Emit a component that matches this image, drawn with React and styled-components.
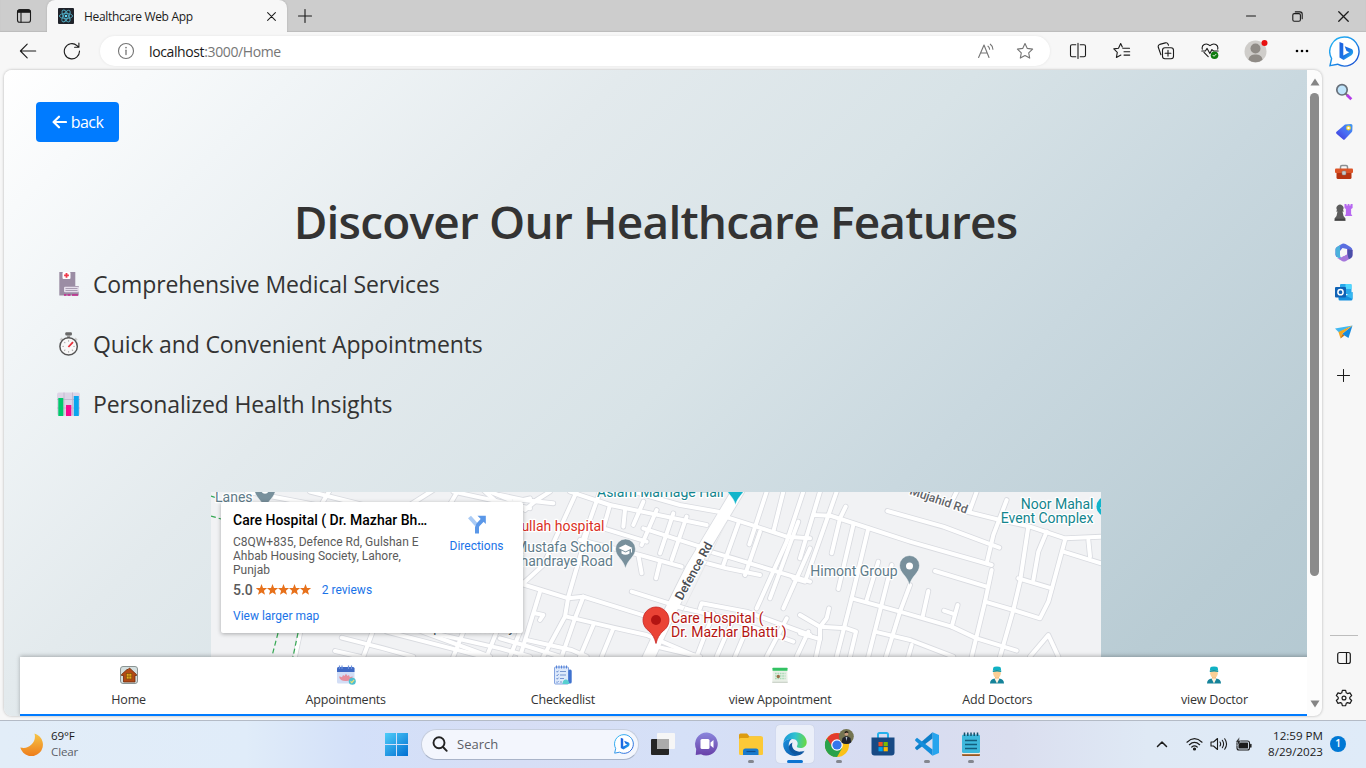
import React from "react";
import styled, { createGlobalStyle } from "styled-components";

const GlobalStyle = createGlobalStyle`
  * { box-sizing: border-box; }
  body { margin: 0; overflow: hidden; font-family: "Open Sans", "Noto Sans", sans-serif; color: #1b1b1b; }
  svg { display: block; flex: none; }
`;

/* ---------- window ---------- */

const Screen = styled.div`
  width: 1366px;
  height: 768px;
  display: flex;
  flex-direction: column;
  background: #f7f7f7;
  overflow: hidden;
`;

const TabStrip = styled.header`
  height: 32px;
  flex: none;
  display: flex;
  align-items: stretch;
  background: #cdcdcd;
  box-shadow: inset 0 -1px 1px #bcbcbc;
`;

const StripButton = styled.div`
  width: ${(p) => p.$width}px;
  display: flex;
  align-items: center;
  justify-content: center;
`;

const Tab = styled.div`
  width: 240px;
  display: flex;
  align-items: center;
  padding: 0 11px 0 11px;
  background: #f7f7f7;
  border-radius: 8px 8px 0 0;
  box-shadow: 0 0 2px #a8a8a8;
  clip-path: inset(-3px -3px 0 -3px);
`;

const TabTitle = styled.span`
  flex: 1;
  margin-left: 10px;
  font-size: 12px;
  letter-spacing: -0.33px;
  white-space: nowrap;
`;

const WindowButtons = styled.div`
  display: flex;
  margin-left: auto;
`;

const Toolbar = styled.div`
  height: 38px;
  flex: none;
  display: flex;
  align-items: center;
  padding-left: 6px;
`;

const ToolSlot = styled.div`
  width: ${(p) => p.$width || 44}px;
  height: 38px;
  display: flex;
  align-items: center;
  justify-content: center;
`;

const AddressBar = styled.div`
  width: 950px;
  height: 30px;
  margin: 0 5px 0 6px;
  padding: 0 16px 0 17px;
  display: flex;
  align-items: center;
  background: #fff;
  border-radius: 15px;
  box-shadow: 0 0 3px rgba(0, 0, 0, 0.08);
`;

const Url = styled.span`
  flex: 1;
  margin-left: 14px;
  font-size: 14px;
  letter-spacing: -0.38px;
  color: #767676;
  em { font-style: normal; color: #1a1a1a; }
`;

const AddressActions = styled.div`
  display: flex;
  gap: 20px;
`;

const Workspace = styled.div`
  height: 650px;
  flex: none;
  display: flex;
  padding-left: 4px;
`;

const Viewport = styled.div`
  width: 1318px;
  height: 646px;
  display: flex;
  border-radius: 8px;
  overflow: hidden;
  background: #fcfcfc;
  box-shadow: 0 0 3px rgba(0, 0, 0, 0.28);
`;

/* ---------- page ---------- */

const Page = styled.main`
  width: 1303px;
  flex: none;
  display: flex;
  flex-direction: column;
  overflow: hidden;
  background: linear-gradient(135deg, #ffffff 0%, #f1f5f7 15%, #e3eaed 32%, #d8e3e7 50%, #c9d8df 67%, #b9ccd4 88%, #b3c8d1 100%);
`;

const PageBody = styled.div`
  height: 587px;
  flex: none;
  padding: 32px 32px 0;
  overflow: hidden;
`;

const BackButton = styled.button`
  width: 83px;
  height: 40px;
  padding: 0;
  display: flex;
  align-items: center;
  justify-content: center;
  gap: 4px;
  border: 0;
  border-radius: 4px;
  background: #007bff;
  color: #fff;
  font: 400 16px "Open Sans", sans-serif;
  letter-spacing: -0.5px;
`;

const Heading = styled.h1`
  margin: 46px 0 0;
  height: 66px;
  line-height: 66px;
  text-align: center;
  font-size: 46px;
  font-weight: 600;
  letter-spacing: -0.81px;
  color: #333;
  white-space: nowrap;
`;

const FeatureList = styled.ul`
  list-style: none;
  margin: 0;
  padding: 0 0 0 21px;
`;

const Feature = styled.li`
  height: 60px;
  display: flex;
  align-items: center;
  gap: 12px;
  font-size: 23px;
  letter-spacing: -0.13px;
  color: #333;
`;

const MapFrame = styled.section`
  position: relative;
  width: 890px;
  height: 165px;
  margin: 58px auto 0;
  background: #f1f2f4;
  overflow: hidden;
`;

const PlaceCard = styled.div`
  position: absolute;
  left: 10px;
  top: 10px;
  width: 302px;
  height: 131px;
  padding: 9px 0 0 12.5px;
  display: flex;
  background: #fff;
  border-radius: 2px;
  box-shadow: 0 1px 4px rgba(0, 0, 0, 0.3);
  font-family: Roboto, sans-serif;
  font-size: 12px;
  line-height: 14px;
  color: #5b5b5b;
`;

const PlaceInfo = styled.div`
  width: 204px;
`;

const PlaceName = styled.div`
  font-size: 14px;
  font-weight: 500;
  line-height: 18px;
  color: #000;
  white-space: nowrap;
`;

const PlaceAddress = styled.div`
  width: 200px;
  margin-top: 6px;
`;

const Rating = styled.div`
  display: flex;
  align-items: center;
  margin-top: 5px;
  height: 16px;
  b { font-size: 14px; font-weight: 500; margin-right: 3px; }
`;

const Link = styled.a`
  color: #1a73e8;
`;

const ReviewsLink = styled(Link)`
  margin-left: 10px;
`;

const LinkRow = styled.div`
  margin-top: 11px;
`;

const Directions = styled.div`
  width: 79px;
  padding-top: 4px;
  display: flex;
  flex-direction: column;
  align-items: center;
  gap: 5px;
`;

const BottomNav = styled.nav`
  position: relative;
  width: 1303px;
  height: 59px;
  flex: none;
  margin-left: 16px;
  display: grid;
  grid-template-columns: repeat(6, 1fr);
  background: #fff;
  border-bottom: 2px solid #007bff;
  box-shadow: 0 -1px 4px rgba(0, 0, 0, 0.28);
`;

const NavItem = styled.div`
  display: flex;
  flex-direction: column;
  align-items: center;
  padding-top: 8px;
  gap: 6px;
  font-size: 12.5px;
  line-height: 18px;
  letter-spacing: -0.2px;
  color: #333;
`;

/* ---------- scrollbar and side panel ---------- */

const Scrollbar = styled.div`
  width: 15px;
  display: flex;
  flex-direction: column;
  align-items: center;
  padding: 8px 0;
`;

const Thumb = styled.div`
  width: 9px;
  height: 483px;
  margin: 7px 0 auto;
  border-radius: 5px;
  background: #8b8b8b;
`;

const SidePanel = styled.aside`
  width: 43px;
  display: flex;
  flex-direction: column;
  align-items: center;
  padding: 2px 0 2px;
`;

const SideSlot = styled.div`
  height: ${(p) => p.$height || 40}px;
  display: flex;
  align-items: center;
`;

const SideDivider = styled.div`
  width: 28px;
  height: 1px;
  margin: auto 0 2px;
  background: #bdbdbd;
`;

/* ---------- taskbar ---------- */

const Taskbar = styled.footer`
  height: 48px;
  flex: none;
  display: flex;
  align-items: center;
  padding-bottom: 1px;
  border-top: 1px solid #b4bbc6;
  background: linear-gradient(90deg, #e2edf8 0%, #e0ecf9 18%, #d3e0f9 26%, #d7def5 38%, #d5e0f7 50%, #d7dcf1 64%, #dadeef 74%, #dfe9f5 84%, #dfebf8 100%);
`;

const Weather = styled.div`
  width: 374px;
  padding-left: 20px;
  display: flex;
  align-items: center;
  gap: 8px;
`;

const SmallLines = styled.div`
  font-size: 11.6px;
  line-height: 16px;
  letter-spacing: ${(p) => (p.$align ? "0" : "-0.15px")};
  text-align: ${(p) => p.$align || "left"};
  span { display: block; }
  span + span { color: ${(p) => p.$second || "inherit"}; }
`;

const TaskSlot = styled.div`
  position: relative;
  width: 44px;
  height: 46px;
  display: flex;
  align-items: center;
  justify-content: center;
`;

const ActiveTile = styled.div`
  width: 38px;
  height: 38px;
  display: flex;
  align-items: center;
  justify-content: center;
  border-radius: 4px;
  background: #ebeff9;
  box-shadow: 0 0 1px #aeb6c8;
`;

const RunningMark = styled.i`
  position: absolute;
  bottom: 4px;
  left: ${(p) => (p.$active ? 14 : 19)}px;
  width: ${(p) => (p.$active ? 16 : 6)}px;
  height: 3px;
  border-radius: 2px;
  background: ${(p) => (p.$active ? "#0b74d1" : "#84878f")};
`;

const SearchBox = styled.div`
  width: 218px;
  height: 31px;
  margin: 0 2px 0 3px;
  padding: 0 4px 0 10px;
  display: flex;
  align-items: center;
  border: 1px solid #c6cede;
  border-bottom-color: #a9b4c9;
  border-radius: 16px;
  background: #f3f6fd;
  font-size: 13px;
  color: #5c5f66;
  span { flex: 1; margin-left: 9px; }
`;

const Tray = styled.div`
  margin-left: auto;
  padding-right: 20px;
  display: flex;
  align-items: center;
`;

const TrayIcons = styled.div`
  display: flex;
  align-items: center;
  gap: 7px;
  margin: 0 16px 0 18px;
`;

const Badge = styled.div`
  width: 16px;
  height: 16px;
  margin-left: 7px;
  border-radius: 8px;
  background: #0078d4;
  color: #fff;
  font-size: 10px;
  font-weight: 600;
  line-height: 15px;
  text-align: center;
`;

/* ---------- line icons ---------- */

const Line = ({ w = 18, h = w, box = `0 0 ${w} ${h}`, c = "#1b1b1b", sw = 1.1, children }) => (
  <svg width={w} height={h} viewBox={box} fill="none" stroke={c} strokeWidth={sw} strokeLinecap="round" strokeLinejoin="round">
    {children}
  </svg>
);

const TabActionsIcon = () => (
  <Line w={16}>
    <rect x="1.5" y="1.7" width="13" height="12.6" rx="2.4" />
    <path d="M1.5 4.2a2.4 2.4 0 0 1 2.4-2.5h8.2a2.4 2.4 0 0 1 2.4 2.5z" fill="#1b1b1b" />
    <path d="M5 4.5v9.8" />
  </Line>
);
const CloseIcon = ({ size = 9 }) => <Line w={size} box="0 0 10 10" sw="1.15"><path d="M.7.7l8.6 8.6M9.3.7L.7 9.3" /></Line>;
const PlusIcon = ({ size = 14 }) => <Line w={size} box="0 0 14 14"><path d="M7 .5v13M.5 7h13" /></Line>;
const MinimizeIcon = () => <Line w={10}><path d="M.5 5h9" /></Line>;
const RestoreIcon = () => (
  <Line w={11}><rect x=".8" y="2.6" width="7.6" height="7.6" rx="1.5" /><path d="M3.3 .9h4.6a2.3 2.3 0 0 1 2.3 2.3v4.5" /></Line>
);
const BackIcon = () => <Line w={18}><path d="M16.7 9H1.5M8.2 2.2L1.4 9l6.8 6.8" /></Line>;
const ReloadIcon = () => <Line w={18}><path d="M16.5 9A7.6 7.6 0 1 1 14 3.6l1.6 1.4M15.9 1v4.2h-4.3" /></Line>;
const InfoIcon = () => (
  <Line w={18} c="#747474"><circle cx="9" cy="9" r="7.5" /><path d="M9 8.2v4.3" strokeWidth="1.3" /><path d="M9 5.6v.1" strokeWidth="1.6" /></Line>
);
const ReadAloudIcon = () => (
  <Line w={20} h={18} c="#747474"><path d="M2.6 15.5L8 3l5 12.5M4.6 11h6.7M12 4.2c1 .7 1.500 1.700 1.600 3M14.300 2.200c1.700 1.200 2.600 2.900 2.600 5" /></Line>
);
const StarShape = "M9 1.500l2.300 4.900 5.300.700-3.900 3.700 1 5.300L9 13.500l-4.700 2.600 1-5.300L1.400 7.100l5.300-.700z";
const StarIcon = () => <Line w={18} c="#747474"><path d={StarShape} /></Line>;
const SplitIcon = () => (
  <Line w={18}><path d="M6.800 2.800H3a1.500 1.500 0 0 0-1.500 1.500v9A1.500 1.500 0 0 0 3 14.800h3.800M11.200 2.800H15a1.500 1.500 0 0 1 1.500 1.500v9a1.500 1.500 0 0 1-1.500 1.500h-3.800M9 1.200v15.200" /></Line>
);
const FavoritesIcon = () => (
  <Line w={18}><path d="M9.800 6.300H16.500M11 9.700h5.700M11 13.100h5.700M9.300 4.900L7.700 1.600 5.500 6.200.800 6.900l3.500 3.400-.900 5.100 4.500-2.300" /></Line>
);
const CollectionsIcon = () => (
  <Line w={18}>
    <rect x="5.500" y="5.700" width="11" height="11" rx="2.500" />
    <path d="M11 8.300v5.800M8.100 11.200h5.800M3.900 12.700 1.300 5.300a2.300 2.300 0 0 1 1.500-2.900l5.600-1.500a2.300 2.300 0 0 1 2.700 1.400l.4 1" />
  </Line>
);
const HealthIcon = () => (
  <Line w={18}>
    <path d="M1.300 7.200C.300 3 4.800 0 9 3.700c4.200-3.700 8.700-.700 7.700 3.500M3 10.400l4.200 4.200" />
    <path d="M.8 9h3.600l1.700-2.600 2.800 5.200 2-4L12.500 9h4.700" />
    <circle cx="13.500" cy="13.200" r="3.800" fill="#107c10" stroke="none" />
    <path d="M12 13.300l1 1 2-2" stroke="#fff" strokeWidth=".9" />
  </Line>
);
const AvatarIcon = () => (
  <svg width="26" height="26" viewBox="0 0 26 26">
    <circle cx="12.500" cy="13.500" r="11" fill="#cfcdca" />
    <circle cx="12.500" cy="10.500" r="5" fill="#8f8b86" />
    <path d="M5.500 21.800c.5-4 3.400-5.300 7-5.300s6.500 1.300 7 5.300a11 11 0 0 1-14 0z" fill="#8f8b86" />
    <circle cx="21.500" cy="5" r="3" fill="#e81010" />
  </svg>
);
const DotsIcon = () => (
  <svg width="14" height="4"><circle cx="2" cy="2" r="1.300" /><circle cx="7" cy="2" r="1.300" /><circle cx="12" cy="2" r="1.300" /></svg>
);
const BingIcon = ({ size = 31 }) => (
  <svg width={size} height={size} viewBox="0 0 31 31">
    <defs>
      <linearGradient id="bingRing" x1="0" y1="0" x2="1" y2="1"><stop offset="0" stopColor="#27b8f5" /><stop offset=".5" stopColor="#1b8ee8" /><stop offset="1" stopColor="#1b45cf" /></linearGradient>
      <linearGradient id="bingB" x1="0" y1="0" x2="1" y2="1"><stop offset="0" stopColor="#1d5fe0" /><stop offset=".55" stopColor="#1b74e4" /><stop offset="1" stopColor="#2cc6f2" /></linearGradient>
    </defs>
    <path d="M15.500 1A14.500 14.500 0 1 1 8.500 28.200L1 29.700 2.600 22.500A14.500 14.500 0 0 1 15.500 1z" fill="#fff" stroke="url(#bingRing)" strokeWidth="1.400" />
    <path d="M10.500 6l3.800 1.500v12l6-3.300-2.800-1.300-1.800-4.600 7 2.700c2 1.300 2 4.700-.3 6.300l-7.800 4.800-4.100-2.500z" fill="url(#bingB)" />
  </svg>
);
const ReactFavicon = () => (
  <svg width="16" height="16" viewBox="0 0 16 16">
    <rect width="16" height="16" rx="1" fill="#20232a" />
    <g fill="none" stroke="#4fa8bf" strokeWidth=".9">
      {[0, 60, 120].map((a) => <ellipse key={a} cx="8" cy="8" rx="6.600" ry="2.600" transform={`rotate(${a} 8 8)`} />)}
    </g>
    <circle cx="8" cy="8" r="1.300" fill="#61dafb" />
  </svg>
);
const ArrowLeftBold = () => (
  <Line w={15} h={14} c="#fff" sw="2.200"><path d="M14 7H1.800M7 1.700L1.600 7 7 12.300" /></Line>
);

/* ---------- side panel icons ---------- */

const SearchColor = () => (
  <svg width="18" height="18" viewBox="0 0 18 18">
    <path d="M10.500 10.500l2.300 2.300" stroke="#777" strokeWidth="2" /><path d="M12 12l4.300 4.300" stroke="#b43be8" strokeWidth="2.800" />
    <circle cx="7" cy="6.800" r="5.200" fill="#bfe4fb" stroke="#68707a" strokeWidth="1.700" />
  </svg>
);
const TagIcon = () => (
  <svg width="18" height="18" viewBox="0 0 18 18">
    <defs><linearGradient id="tag" x1="1" y1="0" x2="0" y2="1"><stop offset="0" stopColor="#3f9bf2" /><stop offset=".5" stopColor="#4a6cf3" /><stop offset="1" stopColor="#3e35d8" /></linearGradient></defs>
    <path d="M10 1.500l6-.500q1.500 0 1.500 1.500l-.200 5.200q0 .8-.7 1.500l-6.700 7q-1 1-2 0L1.500 10.800q-1-1 0-2z" fill="url(#tag)" />
    <circle cx="13.500" cy="5" r="1.800" fill="#fff" stroke="#f4d531" strokeWidth="1.200" />
  </svg>
);
const ToolboxIcon = () => (
  <svg width="18" height="16" viewBox="0 0 18 16">
    <path d="M5.500 5V3q0-1.500 1.500-1.500h4q1.500 0 1.500 1.500v2" fill="none" stroke="#8b8f92" strokeWidth="1.500" />
    <path d="M1.500 8h15v5.500q0 1.500-1.500 1.500H3q-1.500 0-1.500-1.500z" fill="#b73410" />
    <rect x="0" y="4.500" width="18" height="4.500" rx="1" fill="#dc5427" />
    <rect x="7" y="7" width="4" height="4" rx="1" fill="#c9c9c9" stroke="#7a7a7a" strokeWidth=".5" />
  </svg>
);
const ChessIcon = () => (
  <svg width="19" height="19" viewBox="0 0 19 19">
    <path d="M10.500 1h2v1.500h1.200V1h1.700v1.500h1.200V1h2v4l-1.500 1v5l1.300 2h-7.500l1-2V6l-1.400-1z" fill="#b768f0" />
    <path d="M3 7a3.500 3.500 0 1 1 6 0l1 1.500H8.500l1 4.500 2 2.500V18H.500v-2.500L2.500 13l1-4.500H2z" fill="#5c5c5c" />
    <path d="M1 16.300h10" stroke="#3c3c3c" />
  </svg>
);
const M365Icon = () => (
  <svg width="18" height="19" viewBox="0 0 18 19">
    <path d="M6 1.500Q8 0 10.500 1l5 3Q17.500 5 17.500 7.500L15 9 12 6 7.500 5 5 8v5L1.500 14Q0 12.500.5 10V6.500Q.5 4.500 2 4z" fill="#5b6ee0" />
    <path d="M.5 10v-3.500Q.500 4.500 2 4l4-2.500Q4.500 3 5 6v6q0 2 1.500 3.200L3.500 15Q.800 14 .5 10z" fill="#4bb1dc" />
    <path d="M17.500 7v5q0 2-1.500 3l-5 3q-2 1-4 0L2 15q3 .500 5-1l5-3V6z" fill="#a678dc" />
    <path d="M12.500 6l5 1v5q0 2-1.500 3l-2 1.300q-1-2-1.500-5.300z" fill="#4a4fa8" />
    <path d="M9 6.200l3 1.700v3.300l-3 1.700-3-1.700V7.900z" fill="#f7f7f7" />
  </svg>
);
const OutlookIcon = () => (
  <svg width="18" height="17" viewBox="0 0 18 17">
    <rect x="5" y="0" width="11.500" height="10" rx="1" fill="#28a8ea" /><path d="M10.500 0h5q1 0 1 1v4h-6z" fill="#50d9ff" />
    <path d="M3.500 8.500l7 3.500L17.500 8v7q0 1.500-1.500 1.500H5q-1.500 0-1.500-1.500z" fill="#1490df" /><path d="M17.500 8v7l-7-3.500z" fill="#35b8f1" />
    <rect x="0" y="3" width="11" height="10.500" rx="1" fill="#0f62b5" />
    <circle cx="5.500" cy="8.200" r="2.600" fill="none" stroke="#fff" strokeWidth="1.500" />
  </svg>
);
const DropIcon = () => (
  <svg width="18" height="14" viewBox="0 0 18 14">
    <path d="M0 3.500L17.500.5 4 7.500z" fill="#41b8f1" /><path d="M17.500.500L13.500 13 7 9z" fill="#168bdf" />
    <path d="M3.500 7L17.500.5 7 9l-1.500 4.500z" fill="#f7a81e" /><path d="M5.500 13.500L7 9l2.500 1.500z" fill="#c9720d" />
  </svg>
);
const PanelIcon = () => <Line w={16} sw="1.200"><rect x="1.700" y="2.500" width="12.600" height="11" rx="2" /><path d="M10.500 2.500v11" /></Line>;
const GearIcon = () => (
  <Line w={18} box="0 0 24 24" sw="1.600">
    <circle cx="12" cy="12" r="2.600" />
    <path d="M9.800 1.800h4.400l.8 3.300 1.700 1 3.300-1 2.200 3.800-2.500 2.300v1.800l2.500 2.300-2.200 3.800-3.300-1-1.700 1-.8 3.200H9.800L9 19.100l-1.700-1-3.300 1-2.200-3.800L4.300 13v-1.800L1.800 8.900 4 5.100l3.300 1 1.700-1z" />
  </Line>
);

/* ---------- feature emoji ---------- */

const HospitalEmoji = () => (
  <svg width="24" height="24" viewBox="0 0 24 24">
    <path d="M2.300 0h16v14h3.400v9.500H2.300z" fill="#9b8da4" /><rect x="5.500" y="0" width="8" height="7" rx="1" fill="#fff" />
    <path d="M9.500 1v4.800M7.100 3.400h4.800" stroke="#f03a4b" strokeWidth="1.800" />
    <rect x="7" y="14.700" width="15" height="5.600" rx="1" fill="#e5deeb" />
    <path d="M8.500 16.500h12M8.500 18.500h12" stroke="#9b8da4" strokeWidth=".8" />
    <path d="M7 23h2.500M10.500 23h3M15 23h6" stroke="#c2258a" strokeWidth="1.300" />
  </svg>
);
const StopwatchEmoji = () => (
  <svg width="24" height="24" viewBox="0 0 24 24">
    <rect x="8.300" y=".2" width="6.600" height="3.400" rx="1" fill="#686868" /><path d="M11.600 3v3" stroke="#999" strokeWidth="3" />
    <path d="M3.500 8.500l2-2M19.700 8.500l-2-2" stroke="#ccc" strokeWidth="2.500" />
    <circle cx="11.600" cy="14.400" r="8.700" fill="#f8f8f8" stroke="#555" strokeWidth="1.500" />
    <g stroke="#aaa">{[0, 45, 90, 135, 180, 225, 270, 315].map((a) => <path key={a} d="M11.600 8.200v1.500" transform={`rotate(${a} 11.600 14.400)`} />)}</g>
    <path d="M11.400 15l4.600-4.800" stroke="#e8303a" strokeWidth="1.800" />
  </svg>
);
const ChartEmoji = () => (
  <svg width="24" height="24" viewBox="0 0 24 24">
    <rect width="23" height="23" y=".5" rx="2" fill="#dcd4e6" />
    <path d="M7 .5v23M15.500.5v23M0 7.500h23M0 16h23" stroke="#beb4cb" strokeWidth=".8" />
    <rect x="1.300" y="6" width="5" height="18" fill="#00c96b" /><rect x="9" y="13" width="5.300" height="11" fill="#f70a8d" /><rect x="16.800" y="4" width="5" height="20" fill="#0aa5ee" />
  </svg>
);

/* ---------- bottom nav icons ---------- */

const HomeColor = () => (
  <svg width="20" height="20" viewBox="0 0 20 20">
    <rect x="1.500" y="1.500" width="17" height="17" rx="2.500" fill="#d4dfdf" stroke="#8a9493" />
    <path d="M2.500 9.500L8 4.500h1L10.500 3l7 6.500v1H16V17H4.500v-6.500h-2z" fill="#b34a16" stroke="#6f2b0c" strokeWidth=".8" />
    <rect x="7.300" y="8.500" width="5.500" height="5.500" fill="#e7a81d" stroke="#7b4e0c" strokeWidth=".7" /><path d="M10 8.500V14M7.300 11.200h5.500" stroke="#7b4e0c" strokeWidth=".6" />
  </svg>
);
const CalendarColor = () => (
  <svg width="20" height="20" viewBox="0 0 20 20">
    <rect x="1" y="2" width="17.500" height="16.500" rx="1.500" fill="#d3def6" /><path d="M1 7V3.500Q1 2 2.500 2H17q1.500 0 1.500 1.500V7z" fill="#3f69c4" />
    <path d="M3.500.5v3.500M6 .5v3.500M12.500.5v3.500M15.500.5v3.500" stroke="#6d91dc" strokeWidth="1.200" />
    <path d="M3 11.500q2 0 3 .8L7 10l1.500 1L10 8.800l1.500 2.200L13 10l.8 2.300q1.500-.8 3-.8-1 4.500-7 4.500t-6.800-4.500z" fill="#e58e9d" />
    <circle cx="16.300" cy="16.300" r="3.500" fill="#50bfd0" /><path d="M14.500 16.300l1.300 1.300 2.400-2.800" stroke="#f4e36c" strokeWidth="1.100" fill="none" />
  </svg>
);
const ChecklistColor = () => (
  <svg width="20" height="20" viewBox="0 0 20 20">
    <rect x="1.500" y="2" width="14" height="17" rx="1" fill="#dde9fb" stroke="#789bdc" strokeWidth=".9" />
    <path d="M3.500.500v3M6 .5v3M8.500.5v3M11 .5v3M13.500.5v3" stroke="#5583d8" />
    <path d="M3.500 6.500l.7.700 1.300-1.500M3.500 10l.7.700L5.500 9.200M3.500 13.500l.7.700 1.300-1.500M3.500 17l.7.500 1.300-1.300" stroke="#3a67bd" strokeWidth=".8" fill="none" />
    <path d="M7 6.500h6M7 10h6M7 13.500h4M7 17h2" stroke="#6a8cc9" strokeWidth=".9" />
    <rect x="15.300" y="4.500" width="3.400" height="14" rx="1.500" fill="#3f72cf" /><path d="M9.500 19q0-4 3-4.500 3-.300 4 4.500z" fill="#57cfd0" />
  </svg>
);
const GreenCalendar = () => (
  <svg width="20" height="20" viewBox="0 0 20 20">
    <path d="M2.800 5h14.400l.5 12.500H2.300z" fill="#e9efe6" /><path d="M2.300 17.300h15.400" stroke="#b9c2b6" strokeWidth=".8" />
    <rect x="2.500" y="2.700" width="15" height="3" rx=".500" fill="#32c263" />
    <path d="M5 8.500h10.500M5 11h10.500M5 13.500h10.500" stroke="#a9dcb7" strokeWidth="1.500" strokeDasharray="1.700 .7" /><circle cx="8.300" cy="11.500" r="1.700" fill="#9b6e48" />
  </svg>
);
const DoctorColor = () => (
  <svg width="20" height="20" viewBox="0 0 20 20">
    <path d="M3 18.500q0-4.500 5-5h4q5 .5 5 5z" fill="#16839a" /><path d="M8 11.500h4v2.500l-2 2-2-2z" fill="#f1b877" /><path d="M7.500 13.500L10 18.500l2.500-5" fill="#fff1dd" />
    <ellipse cx="10" cy="8.300" rx="3.800" ry="4.500" fill="#fbcf95" /><path d="M5.800 5.700l.5-3.200Q7 1.500 10 1.500t3.700 1l.5 3.200q-4-1.200-8.400 0z" fill="#10b1c3" />
    <path d="M5.800 5.700q4-1.200 8.400 0v1.200q-4-1-8.400 0z" fill="#0b92a4" />
  </svg>
);

/* ---------- map ---------- */

const ROAD_SECTIONS = [
  {
    x: -11,
    roads: [
      "M140 20 L400 70 L600 110", "M360 65 L390 15", "M330 20 L490 60", "M590 85 L700 15", "M740 75 L775 15", "M850 15 L900 60 L990 40",
      "M870 20 L930 45", "M760 20 L990 70",
      "M425 458 L550 490 L640 515", "M405 498 L480 515", "M520 435 L490 515", "M300 445 L285 515", "M560 440 L850 515", "M640 430 L870 515",
      "M680 440 L900 490 L990 515", "M790 440 L760 515", "M890 440 L860 515", "M960 440 L930 515",
    ],
  },
  {
    x: 289,
    roads: [
      "M0 30 L70 45 L160 55", "M150 20 L110 45 L75 75", "M230 20 L130 240 L75 290 L60 300", "M265 130 L205 335 L195 395 L130 515", "M210 20 L330 60 L620 120",
      "M330 60 L310 130", "M375 75 L370 125", "M430 50 L400 120", "M470 75 L425 180", "M520 85 L480 205", "M560 95 L515 225",
      "M300 20 L250 160", "M400 20 L540 60 L655 80",
      "M240 165 L420 210 L545 245", "M430 130 L600 185", "M310 130 L440 170",
      "M415 210 L425 265", "M480 230 L468 280", "M395 320 L560 372", "M0 275 L75 300 L205 340 L250 335 L460 400 L500 410",
      "M250 335 L225 400 L185 515", "M200 395 L350 430 L440 450 L590 515", "M120 320 L60 515", "M105 385 L130 390 L120 405", "M0 460 L70 480 L180 515",
      "M80 465 L215 495 L260 515", "M340 430 L305 515", "M280 420 L240 515",
      "M675 95 L770 125 L860 155 L930 160", "M800 20 L748 178", "M850 20 L820 140", "M910 20 L860 170 L770 370", "M930 190 L850 370", "M895 110 L810 340",
      "M595 190 L700 220 L930 290", "M585 225 L680 250 L780 270", "M715 115 L670 240", "M780 140 L735 270",
      "M600 370 L605 355 L740 380 L930 450", "M530 365 L700 405 L880 470", "M640 385 L590 515", "M700 400 L650 515", "M745 420 L705 515",
      "M860 400 L800 515", "M925 440 L890 515", "M470 485 L600 515",
    ],
  },
  {
    x: 589,
    roads: [
      "M85 90 L330 170 L575 240", "M262 78 L430 125 L598 188", "M405 258 L560 305", "M555 350 L640 375 L720 400 L745 350 L795 165",
      "M500 80 L600 105 L690 125 L795 160 L903 155", "M620 45 L580 150 L560 235", "M575 255 L555 350 L515 515", "M685 125 L660 290 L640 375 L600 515",
      "M740 140 L715 200 L700 285", "M655 280 L755 310", "M790 200 L903 235", "M865 165 L870 215", "M155 340 L300 380 L455 425 L530 460 L650 497",
      "M225 440 L330 465 L460 515", "M160 120 L115 312", "M205 130 L155 340 L110 515", "M235 230 L200 345", "M275 240 L205 515", "M330 300 L300 380 L258 515",
      "M385 318 L368 395", "M473 360 L455 425", "M432 377 L465 388", "M0 390 L60 425 L140 430 L168 440 L150 515", "M0 445 L60 462 L60 425 L80 400 L87 370",
      "M60 460 L48 515", "M137 65 L120 100 L95 205", "M110 20 L15 290 L-20 280", "M60 20 L0 220", "M690 515 L745 450 L775 515", "M530 20 L508 80",
      "M470 20 L455 50", "M335 480 L325 515", "M40 90 L90 92",
    ],
  },
];

const Roads = ({ stroke, width, mainWidth }) => (
  <g fill="none" stroke={stroke} strokeWidth={width} strokeLinecap="round" strokeLinejoin="round">
    {ROAD_SECTIONS.map((s) => (
      <g key={s.x} transform={`translate(${s.x} -7) scale(.33333)`}>
        {s.roads.map((d) => <path key={d} d={d} />)}
        {s.x === 289 && <path d="M725 0 L665 100 L575 250 L505 390 L440 530" strokeWidth={mainWidth} />}
      </g>
    ))}
  </g>
);

const Pin = ({ x, y, fill, children, scale = 1 }) => (
  <g transform={`translate(${x} ${y}) scale(${scale})`}>
    <path d="M0 18C-2 9-10 6-10-1.500a10 10 0 0 1 20 0C10 6 2 9 0 18z" fill={fill} stroke="#fff" strokeWidth=".5" />
    {children}
  </g>
);

const MapDrawing = () => (
  <svg width="890" height="165" viewBox="0 0 890 165">
    <Roads stroke="#d9dbe0" width="17" mainWidth="40" />
    <Roads stroke="#ffffff" width="12" mainWidth="35" />
    <g stroke="#36a853" strokeWidth="1.200" strokeDasharray="5 3" fill="none">
      <path d="M0 24l10 3M0 4l6 2M67 141l-6 23M87 141l-5 24" />
    </g>
    <path d="M515 31L464 135" stroke="#e4e6e9" strokeWidth=".8" />
    <Pin x="54" y="-1" fill="#78909c" scale="1.050"><circle r="3.500" cy="-1" fill="#fff" /></Pin>
    <Pin x="524.500" y="-5" fill="#12b5cb" />
    <Pin x="414.500" y="58.500" fill="#78909c">
      <path d="M-7-2.500L0-6l7 3.500L0 1z" fill="#fff" /><path d="M-4 0v3q4 2.500 8 0V0L0 2z" fill="#fff" /><path d="M6-2v4" stroke="#fff" />
    </Pin>
    <Pin x="698.500" y="75" fill="#78909c"><circle r="3.500" fill="#fff" cy="-1" /></Pin>
    <circle cx="895.500" cy="14.500" r="10" fill="#12b5cb" /><path d="M889 16h2v4" stroke="#fff" fill="none" />
    <path d="M445 151.500c-1.500-6-3.500-9-7-12.500a13 13 0 1 1 14 0c-3.500 3.500-5.500 6.500-7 12.500z" fill="#ea4335" stroke="#c5221f" strokeWidth=".8" />
    <circle cx="445" cy="128" r="5" fill="#b31412" />
    <g fontFamily="Roboto, sans-serif" fontSize="14" stroke="#fff" strokeWidth="2.500" paintOrder="stroke" strokeLinejoin="round">
      <text x="4" y="10" fill="#5f7c8a">Lanes</text>
      <text x="386" y="4.500" fill="#12858e">Aslam Marriage Hall</text>
      <text x="393.500" y="39" textAnchor="end" fill="#d93025">ullah hospital</text>
      <text x="402" y="60" textAnchor="end" fill="#5f7c8a">Mustafa School</text>
      <text x="402" y="74" textAnchor="end" fill="#5f7c8a">Chandraye Road</text>
      <text x="686.500" y="84" textAnchor="end" fill="#5f7c8a">Himont Group</text>
      <text x="882.500" y="17" textAnchor="end" fill="#12858e">Noor Mahal</text>
      <text x="882.500" y="31" textAnchor="end" fill="#12858e">Event Complex</text>
      <text x="460" y="131" fill="#b31412">Care Hospital (</text>
      <text x="460" y="145" fill="#b31412">Dr. Mazhar Bhatti )</text>
      <text x="0" y="0" fontSize="12.500" fontWeight="500" fill="#4a4d52" transform="translate(471 109) rotate(-61)">Defence Rd</text>
      <text x="0" y="0" fontSize="12" fontWeight="500" fill="#5f6368" transform="translate(698 2) rotate(19)">Mujahid Rd</text>
      <text x="304" y="140" textAnchor="end" fontSize="14" fill="#4a5a62">Liaqat Pharmacy</text>
    </g>
  </svg>
);

const Stars = () => (
  <svg width="56" height="12" viewBox="0 0 56 12" fill="#e7711b">
    {[0, 1, 2, 3, 4].map((i) => (
      <path key={i} transform={`translate(${i * 11} 0)`} d="M5.500 0l1.500 3.900 4.100.200-3.200 2.600 1.100 4L5.500 8.500 2 10.700l1.100-4L-.1 4.100 4 3.900z" />
    ))}
  </svg>
);
const DirectionsIcon = () => (
  <svg width="18" height="19" viewBox="0 0 18 19">
    <path d="M1.500 2l6.700 7.500" stroke="#aacbf5" strokeWidth="4" /><path d="M9 18.500v-6q0-1.800 1.400-3.200L15 4.500" fill="none" stroke="#5a97e8" strokeWidth="4" />
    <path d="M9.500.700h8.300V9z" fill="#5a97e8" />
  </svg>
);

/* ---------- taskbar icons ---------- */

const MoonIcon = () => (
  <svg width="23" height="23" viewBox="0 0 23 23">
    <defs><linearGradient id="moon" x1="0" y1="0" x2="0" y2="1"><stop offset="0" stopColor="#f6c546" /><stop offset="1" stopColor="#ee7d1b" /></linearGradient></defs>
    <path d="M14.500.500A11.500 11.500 0 1 1 .3 14.500 11.500 11.500 0 0 0 14.500.500z" fill="url(#moon)" />
  </svg>
);
const StartIcon = () => (
  <svg width="23" height="23" viewBox="0 0 23 23">
    <defs><linearGradient id="win" gradientUnits="userSpaceOnUse" x1="0" y1="0" x2="20" y2="23"><stop offset="0" stopColor="#4fcdf9" /><stop offset="1" stopColor="#0574d4" /></linearGradient></defs>
    <path d="M0 0h11v11H0zM12 0h11v11H12zM0 12h11v11H0zM12 12h11v11H12z" fill="url(#win)" />
  </svg>
);
const SearchGlyph = () => <Line w={16} c="#222" sw="1.900"><circle cx="7" cy="6.700" r="5.500" /><path d="M11 11l3.700 3.800" /></Line>;
const TaskViewIcon = () => (
  <svg width="24" height="24" viewBox="0 0 24 24"><rect x="0" y="7" width="18" height="16" rx="1" fill="#252525" /><rect x="6" y="1" width="18" height="16" rx="1" fill="#f6f6f6" /><path d="M6 7h12v10H7q-1 0-1-1z" fill="#ababab" /></svg>
);
const ChatIcon = () => (
  <svg width="24" height="24" viewBox="0 0 24 24">
    <defs><linearGradient id="chat" x1="0" y1="0" x2="0" y2="1"><stop offset="0" stopColor="#8a86dc" /><stop offset="1" stopColor="#6840a8" /></linearGradient></defs>
    <path d="M12 .5A11.500 11.500 0 1 1 6 22.200L.7 23l.5-6A11.500 11.500 0 0 1 12 .5z" fill="url(#chat)" />
    <rect x="5.500" y="7" width="9" height="10" rx="1.500" fill="#fff" /><path d="M15.500 10.500L18.500 8v8l-3-2.500z" fill="#fff" />
  </svg>
);
const FolderIcon = () => (
  <svg width="24" height="23" viewBox="0 0 24 23">
    <path d="M0 2Q0 .500 1.500.500H8l2.500 3H22V10H0z" fill="#dd9c10" /><path d="M0 6.500Q0 5 1.500 5H9l2-1.700h11.500Q24 3.300 24 5v16q0 1-1.300 1H1.500Q0 22 0 20.500z" fill="#fcc937" />
    <path d="M4 22v-4q0-2.500 2.500-2.500h10.500Q19.500 15.500 19.500 18v4z" fill="#1879cd" /><path d="M7.500 18.500h9" stroke="#0c4f91" strokeWidth="1.200" />
  </svg>
);
const EdgeIcon = () => (
  <svg width="24" height="24" viewBox="0 0 24 24">
    <defs>
      <linearGradient id="edgeTop" x1="0" y1=".3" x2="1" y2=".4"><stop offset="0" stopColor="#1b95d8" /><stop offset=".5" stopColor="#2fc3d0" /><stop offset="1" stopColor="#67d945" /></linearGradient>
      <linearGradient id="edgeBottom" x1="0" y1="0" x2="1" y2="1"><stop offset="0" stopColor="#1a8fdd" /><stop offset="1" stopColor="#0b4f9f" /></linearGradient>
    </defs>
    <path d="M.3 11C1 4.500 6 .2 12 .2c7 0 11.700 5 11.700 9.800 0 4-3 6-6.300 6-2.700 0-4-1-3.400-2 2-3.500-.500-7-4.500-7C5 7 1 8.500.3 11z" fill="url(#edgeTop)" />
    <path d="M.2 12C.5 8.500 4.500 6.900 8.800 7c-4.500 3-4.500 11 3.200 13.800 4 1.400 7 .2 9.500-1.600C19.500 22 16 23.900 12 23.900 5 23.900 0 18.500.2 12z" fill="url(#edgeBottom)" />
    <path d="M9.500 10.500C7.500 16 12 20.500 18.500 19.500q1.500-.300 3-.800C16.500 25 7.500 22.500 6 16.500q-.8-4 3.500-6z" fill="#0d569f" />
  </svg>
);
const ChromeIcon = () => (
  <svg width="30" height="30" viewBox="0 0 30 30">
    <circle cx="13" cy="16" r="12" fill="#fbc116" /><path d="M13 16L2.600 10A12 12 0 0 1 23.400 10z" fill="#e33b2e" />
    <path d="M2.600 10A12 12 0 0 0 13 28l5.200-9L13 16z" fill="#2aa24c" /><path d="M3 9.500L9 19l4-3V10z" fill="#e33b2e" /><path d="M2.600 10L8 19l5 3-3.500 5.500A12 12 0 0 1 2.600 10z" fill="#2aa24c" />
    <circle cx="13" cy="16" r="5.800" fill="#fff" /><circle cx="13" cy="16" r="4.600" fill="#3476ec" />
    <circle cx="22.300" cy="7.500" r="7.500" fill="#747451" /><path d="M17.500 13.500l1-4.500 3-1.800h2l3 1.800.7 4.500q-4.500 3-9.700 0z" fill="#20242e" /><circle cx="22.400" cy="4.700" r="2" fill="#c99c7e" /><path d="M20.300 4.500q0-2.500 2.200-2.500t2 2.500l-1.500-1z" fill="#1a1614" /><path d="M21.600 8l.9 4 .8-4z" fill="#b7c8dd" />
  </svg>
);
const StoreIcon = () => (
  <svg width="24" height="24" viewBox="0 0 24 24">
    <path d="M7 6V2.500Q7 1 8.500 1h7Q17 1 17 2.500V6" fill="none" stroke="#25b1ec" strokeWidth="2" /><path d="M.5 5.500h23v15q0 3-3 3h-17q-3 0-3-3z" fill="#184a84" />
    <rect x="7.500" y="10" width="4.200" height="4.200" fill="#f25022" /><rect x="12.600" y="10" width="4.200" height="4.200" fill="#7fba00" /><rect x="7.500" y="15.100" width="4.200" height="4.200" fill="#00a4ef" /><rect x="12.600" y="15.100" width="4.200" height="4.200" fill="#ffb900" />
  </svg>
);
const CodeIcon = () => (
  <svg width="24" height="24" viewBox="0 0 24 24">
    <path d="M17.500.3L24 3v18l-6.500 2.700z" fill="#27a5ee" /><path d="M17.500 6.500L2 18.200.2 16.500v-1.300L17.500.3z" fill="#0d7ec9" /><path d="M17.500 17.500L2 5.800.2 7.500v1.300L17.500 23.700z" fill="#148ddb" />
  </svg>
);
const NotepadIcon = () => (
  <svg width="20" height="25" viewBox="0 0 20 25">
    <rect x="1" y="20" width="18" height="4" rx="1" fill="#98561f" /><rect x="1" y="19.500" width="18" height="2.700" fill="#f3ede0" /><rect x="1" y="2.500" width="18" height="18.500" rx="1.500" fill="#3db8dc" />
    <path d="M3.500.500v3.500M6.800.500v3.500M10 .5v3.500M13.200.5v3.500M16.500.5v3.500" stroke="#15506b" strokeWidth="1.500" /><path d="M4 8.500h12M4 12.500h12M4 16.500h12" stroke="#125e7d" strokeWidth="1.700" />
  </svg>
);
const ChevronUp = () => <Line w={12} h={8} sw="1.500"><path d="M1.500 6.500L6 2l4.500 4.500" /></Line>;
const WifiIcon = () => (
  <Line w={17} h={14} sw="1.200"><path d="M1 5.200q7.500-7 15 0M3.400 7.700q5.100-4.500 10.200 0M5.800 10q2.700-2.200 5.400 0" /><circle cx="8.500" cy="12" r="1" fill="#1b1b1b" /></Line>
);
const VolumeIcon = () => (
  <Line w={18} h={14}><path d="M1 5h2.500L7.500 1.500v11L3.500 9H1zM10 5q1.300 2 0 4M12.300 3.300q2.600 3.700 0 7.400M14.700 1.800q3.700 5.200 0 10.400" /></Line>
);
const BatteryIcon = () => (
  <Line w={17} h={15}><rect x="2" y="4" width="12.500" height="9" rx="2" /><rect x="4" y="6" width="8.500" height="5" fill="#1b1b1b" /><path d="M15.800 7.500v2.500" strokeWidth="1.500" /><path d="M4.500 0L.7 5h2L2 9l4-5H4z" fill="#1b1b1b" stroke="#e0ebf8" strokeWidth=".4" /></Line>
);
const ScrollArrow = ({ down }) => (
  <svg width="10" height="8" viewBox="0 0 10 8"><path d={down ? "M.5.500h9L5 7.500z" : "M5 .5l4.500 7h-9z"} fill="#858585" /></svg>
);

/* ---------- data ---------- */

const FEATURES = [
  [HospitalEmoji, "Comprehensive Medical Services"],
  [StopwatchEmoji, "Quick and Convenient Appointments"],
  [ChartEmoji, "Personalized Health Insights"],
];
const NAV = [
  [HomeColor, "Home"],
  [CalendarColor, "Appointments"],
  [ChecklistColor, "Checkedlist"],
  [GreenCalendar, "view Appointment"],
  [DoctorColor, "Add Doctors"],
  [DoctorColor, "view Doctor"],
];
const TOOLS = [
  { Icon: SplitIcon, width: 45 },
  { Icon: FavoritesIcon, width: 44 },
  { Icon: CollectionsIcon, width: 44 },
  { Icon: HealthIcon, width: 44 },
  { Icon: AvatarIcon, width: 47 },
  { Icon: DotsIcon, width: 45 },
];
const SIDE_APPS = [SearchColor, TagIcon, ToolboxIcon, ChessIcon, M365Icon, OutlookIcon, DropIcon];
const TASKS = [
  { Icon: TaskViewIcon },
  { Icon: ChatIcon },
  { Icon: FolderIcon, running: true },
  { Icon: EdgeIcon, running: true, active: true },
  { Icon: ChromeIcon, running: true },
  { Icon: StoreIcon },
  { Icon: CodeIcon, running: true },
  { Icon: NotepadIcon, running: true },
];

export default function App() {
  return (
    <Screen>
      <GlobalStyle />
      <TabStrip>
        <StripButton $width={47}><TabActionsIcon /></StripButton>
        <Tab>
          <ReactFavicon />
          <TabTitle>Healthcare Web App</TabTitle>
          <CloseIcon size={9} />
        </Tab>
        <StripButton $width={36}><PlusIcon /></StripButton>
        <WindowButtons>
          <StripButton $width={46}><MinimizeIcon /></StripButton>
          <StripButton $width={46}><RestoreIcon /></StripButton>
          <StripButton $width={46}><CloseIcon size={11} /></StripButton>
        </WindowButtons>
      </TabStrip>

      <Toolbar>
        <ToolSlot><BackIcon /></ToolSlot>
        <ToolSlot><ReloadIcon /></ToolSlot>
        <AddressBar>
          <InfoIcon />
          <Url><em>localhost</em>:3000/Home</Url>
          <AddressActions><ReadAloudIcon /><StarIcon /></AddressActions>
        </AddressBar>
        {TOOLS.map(({ Icon, width }, i) => <ToolSlot key={i} $width={width}><Icon /></ToolSlot>)}
        <ToolSlot $width={40}><BingIcon /></ToolSlot>
      </Toolbar>

      <Workspace>
        <Viewport>
          <Page>
            <PageBody>
              <BackButton><ArrowLeftBold /><span>back</span></BackButton>
              <Heading>Discover Our Healthcare Features</Heading>
              <FeatureList>
                {FEATURES.map(([Icon, label]) => <Feature key={label}><Icon />{label}</Feature>)}
              </FeatureList>
              <MapFrame>
                <MapDrawing />
                <PlaceCard>
                  <PlaceInfo>
                    <PlaceName>Care Hospital ( Dr. Mazhar Bh…</PlaceName>
                    <PlaceAddress>C8QW+835, Defence Rd, Gulshan E Ahbab Housing Society, Lahore, Punjab</PlaceAddress>
                    <Rating><b>5.0</b><Stars /><ReviewsLink>2 reviews</ReviewsLink></Rating>
                    <LinkRow><Link>View larger map</Link></LinkRow>
                  </PlaceInfo>
                  <Directions><DirectionsIcon /><Link>Directions</Link></Directions>
                </PlaceCard>
              </MapFrame>
            </PageBody>
            <BottomNav>
              {NAV.map(([Icon, label]) => <NavItem key={label}><Icon />{label}</NavItem>)}
            </BottomNav>
          </Page>
          <Scrollbar><ScrollArrow /><Thumb /><ScrollArrow down /></Scrollbar>
        </Viewport>
        <SidePanel>
          {SIDE_APPS.map((Icon, i) => <SideSlot key={i}><Icon /></SideSlot>)}
          <SideSlot $height={47}><PlusIcon size={13} /></SideSlot>
          <SideDivider />
          <SideSlot><PanelIcon /></SideSlot>
          <SideSlot><GearIcon /></SideSlot>
        </SidePanel>
      </Workspace>

      <Taskbar>
        <Weather>
          <MoonIcon />
          <SmallLines $second="#5b6067"><span>69°F</span><span>Clear</span></SmallLines>
        </Weather>
        <TaskSlot><StartIcon /></TaskSlot>
        <SearchBox><SearchGlyph /><span>Search</span><BingIcon size={20} /></SearchBox>
        {TASKS.map(({ Icon, running, active }, i) => (
          <TaskSlot key={i}>
            {active ? <ActiveTile><Icon /></ActiveTile> : <Icon />}
            {running && <RunningMark $active={active} />}
          </TaskSlot>
        ))}
        <Tray>
          <ChevronUp />
          <TrayIcons><WifiIcon /><VolumeIcon /><BatteryIcon /></TrayIcons>
          <SmallLines $align="right"><span>12:59 PM</span><span>8/29/2023</span></SmallLines>
          <Badge>1</Badge>
        </Tray>
      </Taskbar>
    </Screen>
  );
}
